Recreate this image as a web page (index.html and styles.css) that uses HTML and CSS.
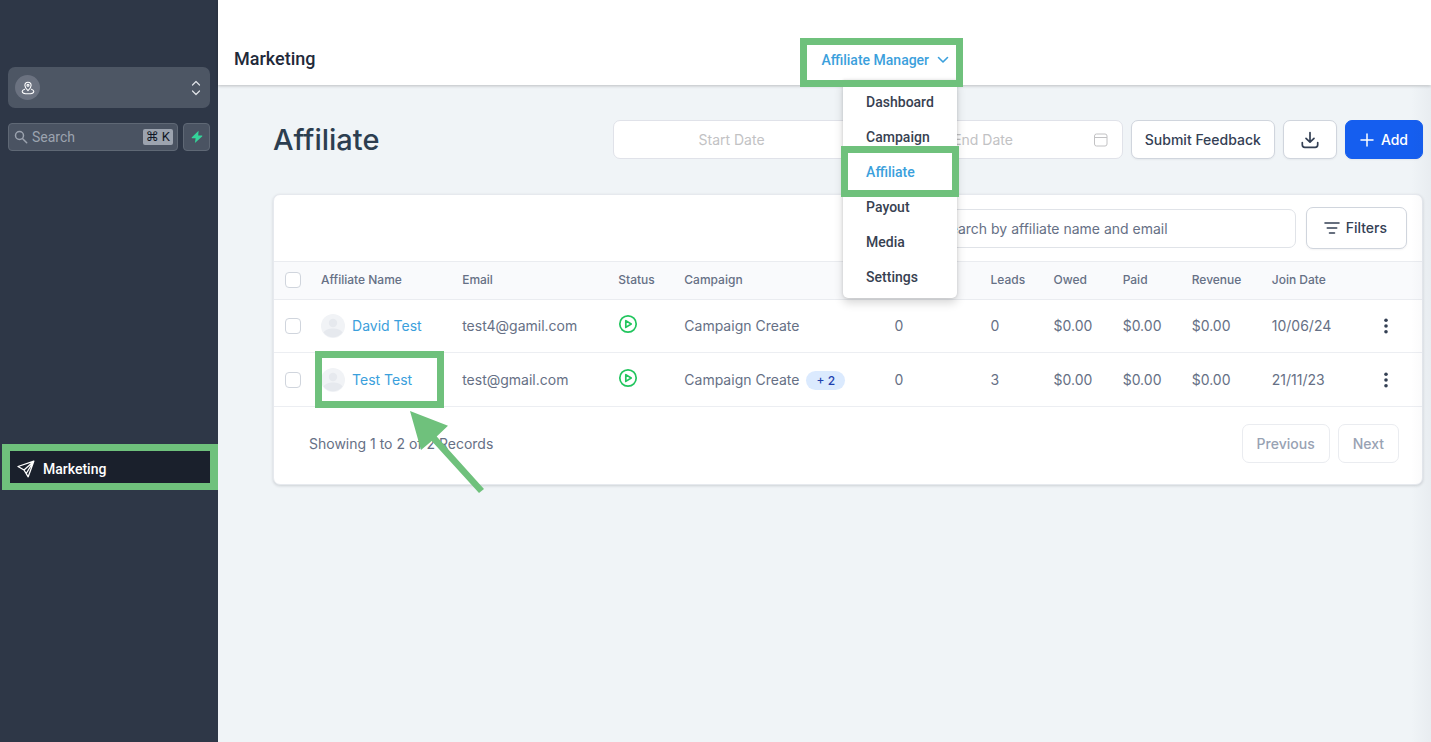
FILE: index.html
```html
<!DOCTYPE html>
<html lang="en">
<head>
<meta charset="utf-8">
<meta name="viewport" content="width=device-width, initial-scale=1">
<title>Affiliate Manager</title>
<link rel="stylesheet" href="styles.css">
</head>
<body>
<div class="app">
  <aside class="sidebar">
    <button class="switcher" type="button" aria-label="Switch location">
      <span class="switcher-avatar">
        <svg width="14" height="14" viewBox="0 0 14 14" fill="none" stroke="currentColor" stroke-width="1.1" stroke-linecap="round" stroke-linejoin="round"><path d="M7 9.6C5 7.600 3.900 6.200 3.900 4.400a3.100 3.100 0 0 1 6.200 0C10.100 6.200 9 7.600 7 9.600Z"/><circle cx="7" cy="4.300" r="1"/><path d="M3.600 8.200C2 8.700 1.200 9.600 1.200 10.500c0 1.300 2.500 2.300 5.800 2.300s5.800-1 5.800-2.300c0-.9-.8-1.800-2.400-2.300"/></svg>
      </span>
      <svg width="10" height="16" viewBox="0 0 10 16" fill="none" stroke="currentColor" stroke-width="1.200" stroke-linecap="round" stroke-linejoin="round"><path d="M1.500 5 5 1.500 8.500 5M1.500 11 5 14.500 8.500 11"/></svg>
    </button>
    <div class="side-search">
      <label class="side-field">
        <svg width="14" height="14" viewBox="0 0 14 14" fill="none" stroke="currentColor" stroke-width="1.500" stroke-linecap="round"><circle cx="5.500" cy="5.500" r="4"/><path d="m8.700 8.700 4 4"/></svg>
        <input type="text" placeholder="Search" aria-label="Search">
        <kbd>⌘ K</kbd>
      </label>
      <button class="bolt" type="button" aria-label="Quick actions">
        <svg width="12" height="14" viewBox="0 0 12 14" fill="currentColor"><path d="M7.600.8.900 7.300c-.4.400-.2 1 .4 1h3.300l-.7 4.700 7.200-6.400c.4-.4.200-1-.4-1H7.200Z"/></svg>
      </button>
    </div>
    <nav class="side-nav">
      <a class="side-link" href="#">
        <svg width="18" height="18" viewBox="0 0 18 18" fill="none" stroke="currentColor" stroke-width="1.300" stroke-linejoin="round" stroke-linecap="round"><path d="M16.800 1.200 1 6.500l6 3.500 4.200 6.800ZM7 10l9.800-8.800M16.800 1.200 9.500 13"/></svg>
        Marketing
        <span class="mark mark-side"></span>
      </a>
    </nav>
  </aside>

  <div class="main">
    <header class="topbar">
      <h2 class="section">Marketing</h2>
      <nav class="tab">
        <button class="tab-button" type="button">Affiliate Manager
          <svg width="12" height="8" viewBox="0 0 12 8" fill="none" stroke="currentColor" stroke-width="1.600" stroke-linecap="round" stroke-linejoin="round"><path d="m1.500 1.500 4.500 4.500 4.500-4.500"/></svg>
        </button>
        <div class="menu">
          <a href="#">Dashboard</a>
          <a href="#">Campaign</a>
          <a class="current" href="#">Affiliate<span class="mark mark-item"></span></a>
          <a href="#">Payout</a>
          <a href="#">Media</a>
          <a href="#">Settings</a>
        </div>
        <span class="mark mark-tab"></span>
      </nav>
    </header>

    <main class="content">
      <div class="page-head">
        <h1>Affiliate</h1>
        <div class="dates">
          <input type="text" placeholder="Start Date" aria-label="Start Date">
          <input type="text" placeholder="End Date" aria-label="End Date">
          <svg width="14" height="14" viewBox="0 0 14 14" fill="none" stroke="currentColor"><rect x=".5" y="1" width="12.500" height="12" rx="2"/><path d="M.5 4.500H13"/></svg>
        </div>
        <button class="btn btn-feedback" type="button">Submit Feedback</button>
        <button class="btn btn-icon" type="button" aria-label="Download">
          <svg width="18" height="18" viewBox="0 0 18 18" fill="none" stroke="currentColor" stroke-width="1.700" stroke-linecap="round" stroke-linejoin="round"><path d="M9 1.500V11M5 7.300l4 3.900 4-3.900M1.300 11.500v2.300c0 1.600.9 2.500 2.500 2.500h10.400c1.600 0 2.500-.9 2.500-2.500v-2.300"/></svg>
        </button>
        <button class="btn btn-primary" type="button">
          <svg width="14" height="14" viewBox="0 0 14 14" fill="none" stroke="currentColor" stroke-width="1.500" stroke-linecap="round"><path d="M7 1v12M1 7h12"/></svg>
          Add
        </button>
      </div>

      <section class="card">
        <div class="toolbar">
          <input class="search" type="text" placeholder="Search by affiliate name and email" aria-label="Search by affiliate name and email">
          <button class="btn btn-filter" type="button">
            <svg width="16" height="14" viewBox="0 0 16 14" fill="none" stroke="currentColor" stroke-width="1.600" stroke-linecap="round"><path d="M1 2h14M3.300 7h9.400M5.500 12h5"/></svg>
            Filters
          </button>
        </div>
        <table>
          <colgroup><col class="c-check"><col class="c-name"><col class="c-email"><col class="c-status"><col class="c-camp"><col class="c-count"><col class="c-leads"><col class="c-owed"><col class="c-paid"><col class="c-rev"><col class="c-date"><col class="c-more"></colgroup>
          <thead>
            <tr>
              <th><input type="checkbox" aria-label="Select all"></th>
              <th>Affiliate Name</th><th>Email</th><th>Status</th><th>Campaign</th><th></th><th>Leads</th><th>Owed</th><th>Paid</th><th>Revenue</th><th>Join Date</th><th></th>
            </tr>
          </thead>
          <tbody>
            <tr>
              <td><input type="checkbox" aria-label="Select David Test"></td>
              <td><a class="person" href="#"><svg width="24" height="24" viewBox="0 0 24 24"><circle cx="12" cy="12" r="12" fill="#f1f3f6"/><circle cx="12" cy="9" r="4.200" fill="#e6e9ee"/><path d="M2.500 18.500C4 15.800 8 14.600 12 14.600s8 1.200 9.500 3.900A12 12 0 0 1 2.500 18.500Z" fill="#e6e9ee"/></svg>David Test</a></td>
              <td>test4@gamil.com</td>
              <td><svg class="play" width="20" height="20" viewBox="0 0 20 20" fill="none" stroke="currentColor" stroke-width="1.700" stroke-linejoin="round"><circle cx="10" cy="10" r="8.200"/><path d="M7.800 6.600v6.800l5.400-3.400Z"/></svg></td>
              <td>Campaign Create</td><td>0</td><td>0</td><td>$0.00</td><td>$0.00</td><td>$0.00</td><td>10/06/24</td>
              <td><button class="more" type="button" aria-label="More"><svg width="4" height="16" viewBox="0 0 4 16" fill="currentColor"><circle cx="2" cy="2.200" r="1.800"/><circle cx="2" cy="8" r="1.800"/><circle cx="2" cy="13.800" r="1.800"/></svg></button></td>
            </tr>
            <tr>
              <td><input type="checkbox" aria-label="Select Test Test"></td>
              <td class="marked"><a class="person" href="#"><svg width="24" height="24" viewBox="0 0 24 24"><circle cx="12" cy="12" r="12" fill="#f1f3f6"/><circle cx="12" cy="9" r="4.200" fill="#e6e9ee"/><path d="M2.500 18.500C4 15.800 8 14.600 12 14.600s8 1.200 9.500 3.900A12 12 0 0 1 2.500 18.500Z" fill="#e6e9ee"/></svg>Test Test</a><span class="mark mark-name"></span><svg class="arrow" width="74" height="82" viewBox="0 0 74 82" fill="currentColor"><path d="M0 0 38 14.700 26.700 25.500 74 78 69 82 21.700 30 11 39Z"/></svg></td>
              <td>test@gmail.com</td>
              <td><svg class="play" width="20" height="20" viewBox="0 0 20 20" fill="none" stroke="currentColor" stroke-width="1.700" stroke-linejoin="round"><circle cx="10" cy="10" r="8.200"/><path d="M7.800 6.600v6.800l5.400-3.400Z"/></svg></td>
              <td>Campaign Create<span class="pill">+ 2</span></td><td>0</td><td>3</td><td>$0.00</td><td>$0.00</td><td>$0.00</td><td>21/11/23</td>
              <td><button class="more" type="button" aria-label="More"><svg width="4" height="16" viewBox="0 0 4 16" fill="currentColor"><circle cx="2" cy="2.200" r="1.800"/><circle cx="2" cy="8" r="1.800"/><circle cx="2" cy="13.800" r="1.800"/></svg></button></td>
            </tr>
          </tbody>
        </table>
        <footer class="pager">
          <span class="summary">Showing 1 to 2 of 2 Records</span>
          <button class="btn" type="button" disabled>Previous</button>
          <button class="btn" type="button" disabled>Next</button>
        </footer>
      </section>
    </main>
  </div>
</div>
</body>
</html>
```

FILE: styles.css
```css
* { box-sizing: border-box; }

body {
  margin: 0;
  font-family: Inter, "Liberation Sans", sans-serif;
  font-size: 14px;
  line-height: 20px;
  color: #667085;
  background: #f0f4f7;
}

svg { display: block; flex: none; }
a { color: inherit; text-decoration: none; }
button, input { font: inherit; color: inherit; }
button { cursor: pointer; }
input { min-width: 0; }
input::placeholder { color: inherit; opacity: 1; }

.app { display: flex; min-height: 100vh; }

/* Sidebar */
.sidebar {
  flex: none;
  width: 218px;
  padding: 67px 8px 0;
  background: #2e3747;
  font-family: Roboto, "Liberation Sans", sans-serif;
}
.switcher {
  display: flex;
  align-items: center;
  justify-content: space-between;
  width: 100%;
  height: 41px;
  padding: 0 9px 0 7px;
  border: 0;
  border-radius: 7px;
  background: #4d5664;
  color: #dfe2e7;
}
.switcher-avatar {
  display: grid;
  place-items: center;
  width: 25px;
  height: 25px;
  border-radius: 50%;
  background: #6b7280;
  color: #fff;
}
.side-search { display: flex; gap: 5px; margin-top: 15px; }
.side-field {
  display: flex;
  flex: 1;
  align-items: center;
  gap: 4px;
  min-width: 0;
  height: 28px;
  padding: 0 4px 0 5px;
  border: 1px solid #5f6875;
  border-radius: 4px;
  background: #4a5362;
  color: #9ca3af;
}
.side-field input {
  flex: 1;
  width: 0;
  padding: 0;
  border: 0;
  background: none;
  outline: 0;
}
kbd {
  padding: 0 3px;
  border-radius: 2px;
  background: #9ca3af;
  color: #111827;
  font: 13px/16px Roboto, "DejaVu Sans", sans-serif;
}
.bolt {
  display: grid;
  place-items: center;
  width: 27px;
  padding: 0;
  border: 1px solid #5f6875;
  border-radius: 4px;
  background: #4a5362;
  color: #34d399;
}
.side-nav { margin-top: 300px; padding-left: 2px; }
.side-link {
  position: relative;
  display: flex;
  align-items: center;
  gap: 8px;
  height: 32px;
  padding: 4px 7px 0;
  background: #1a202c;
  color: #fff;
  font-weight: 500;
}

/* Green call-out frames */
.mark {
  position: absolute;
  z-index: 3;
  border: 7px solid #6fc17c;
  pointer-events: none;
}
.mark-side { inset: -7px -8px; border-width: 7px 8px; }
.mark-tab { inset: 0; }
.mark-item { inset: -8px -2px; }
.mark-name { inset: -2px 7px -2px 5px; }
.arrow {
  position: absolute;
  z-index: 3;
  top: 58px;
  left: 100px;
  color: #6fc17c;
}

/* Top bar */
.main {
  position: relative;
  flex: 1;
  min-width: 0;
}
.main::after {
  content: "";
  position: absolute;
  top: 86px;
  right: 0;
  bottom: 0;
  width: 20px;
  background: linear-gradient(to right, rgba(40, 50, 80, 0), rgba(40, 50, 80, 0.04));
  pointer-events: none;
}
.topbar {
  position: relative;
  z-index: 2;
  display: grid;
  grid-template-columns: 23fr auto 19fr;
  height: 85px;
  padding: 38px 0 0 16px;
  background: #fff;
  box-shadow: 0 1px 3px rgba(0, 0, 0, 0.22);
  font-family: Roboto, "Liberation Sans", sans-serif;
}
.section {
  margin: 0;
  padding-top: 9px;
  font-size: 18px;
  font-weight: 500;
  line-height: 24px;
  color: #1f2a3a;
}
.tab { position: relative; height: 49px; }
.tab-button {
  display: flex;
  align-items: center;
  gap: 8px;
  height: 44px;
  padding: 0 14px 0 21px;
  border: 0;
  background: none;
  color: #3ba0dc;
  font-weight: 500;
  white-space: nowrap;
}
.menu {
  position: absolute;
  top: 42px;
  right: 6px;
  width: 114px;
  padding: 4px 0;
  border-radius: 0 0 5px 5px;
  background: #fff;
  box-shadow: 0 5px 10px rgba(0, 0, 0, 0.16), 0 0 3px rgba(0, 0, 0, 0.14);
  color: #374151;
  font-weight: 500;
}
.menu a {
  position: relative;
  display: block;
  padding: 8px 23px 7px;
}
.menu .current { color: #3ba0dc; }

/* Page heading */
.content { padding: 35px 8px 32px 55px; }
.page-head { display: flex; align-items: center; gap: 8px; }
h1 {
  flex: 1;
  margin: 0;
  font-size: 29px;
  font-weight: 500;
  line-height: 38px;
  color: #2c3e50;
}
.dates {
  display: flex;
  flex: 0 1 510px;
  align-items: center;
  height: 39px;
  padding: 0 14px 0 12px;
  border: 1px solid #e0e2e9;
  border-radius: 7px;
  background: #fff;
  color: #c2c2c4;
}
.dates input {
  flex: 1;
  width: 0;
  padding: 0;
  border: 0;
  background: none;
  outline: 0;
  text-align: center;
}
.dates input + input { margin: 0 5px 0 40px; }
.btn {
  display: inline-flex;
  flex: none;
  align-items: center;
  justify-content: center;
  height: 39px;
  padding: 0 14px;
  border: 1px solid #d0d5dd;
  border-radius: 7px;
  background: #fff;
  color: #344054;
  font-weight: 500;
  box-shadow: 0 1px 2px rgba(16, 24, 40, 0.05);
}
.btn-feedback { padding: 0 13px; }
.btn-icon { padding: 0 17px; }
.btn-primary {
  gap: 7px;
  border-color: #155eef;
  background: #155eef;
  color: #fff;
}
.btn:disabled { border-color: #eaecf0; color: #98a2b3; box-shadow: none; }

/* Table card */
.card {
  margin-top: 35px;
  border: 1px solid #e6e9ee;
  border-radius: 7px;
  background: #fff;
  box-shadow: 0 1px 3px rgba(16, 24, 40, 0.16);
}
.toolbar {
  display: flex;
  align-items: center;
  justify-content: flex-end;
  gap: 10px;
  padding: 12px 15px;
}
.search {
  flex: 0 1 396px;
  height: 39px;
  padding: 0 40px;
  border: 1px solid #e0e3e8;
  border-radius: 7px;
  background: #fff;
}
.btn-filter { gap: 6px; height: 42px; padding: 0 19px 0 17px; }
table {
  width: 100%;
  table-layout: fixed;
  border-collapse: separate;
  border-spacing: 0;
}
.c-check { width: 36px; }
.c-name { width: 141px; }
.c-email { width: 156px; }
.c-status { width: 66px; }
.c-camp { width: 210px; }
.c-count { width: 96px; }
.c-leads { width: 63px; }
.c-owed, .c-paid { width: 69px; }
.c-rev { width: 80px; }
.c-date { width: 102px; }
.c-more { width: 59px; }
th, td {
  padding: 0 0 0 11px;
  text-align: left;
  vertical-align: middle;
  white-space: nowrap;
}
th {
  height: 39px;
  padding-bottom: 2px;
  border: solid #eaecf0;
  border-width: 1px 0;
  background: #f9fafc;
  font-size: 12px;
  font-weight: 500;
}
td { height: 53px; border-bottom: 1px solid #eceef2; }
tr:last-child td { height: 54px; }
.marked { position: relative; }
input[type="checkbox"] {
  display: block;
  width: 16px;
  height: 16px;
  margin: 0;
  appearance: none;
  border: 1px solid #d0d5dd;
  border-radius: 4px;
  background: #fff;
}
.person { display: flex; align-items: center; gap: 7px; color: #3ba0dc; }
.play { margin-bottom: 4px; color: #22c55e; }
.pill {
  display: inline-block;
  margin-left: 7px;
  padding: 0 10px;
  border-radius: 10px;
  background: #dbeafe;
  color: #1e40af;
  font-size: 12px;
  font-weight: 500;
  line-height: 19px;
}
.more {
  display: block;
  padding: 0 10px;
  border: 0;
  background: none;
  color: #344054;
}
.pager {
  display: flex;
  align-items: center;
  gap: 8px;
  padding: 17px 23px 21px 35px;
}
.summary { flex: 1; }
```
